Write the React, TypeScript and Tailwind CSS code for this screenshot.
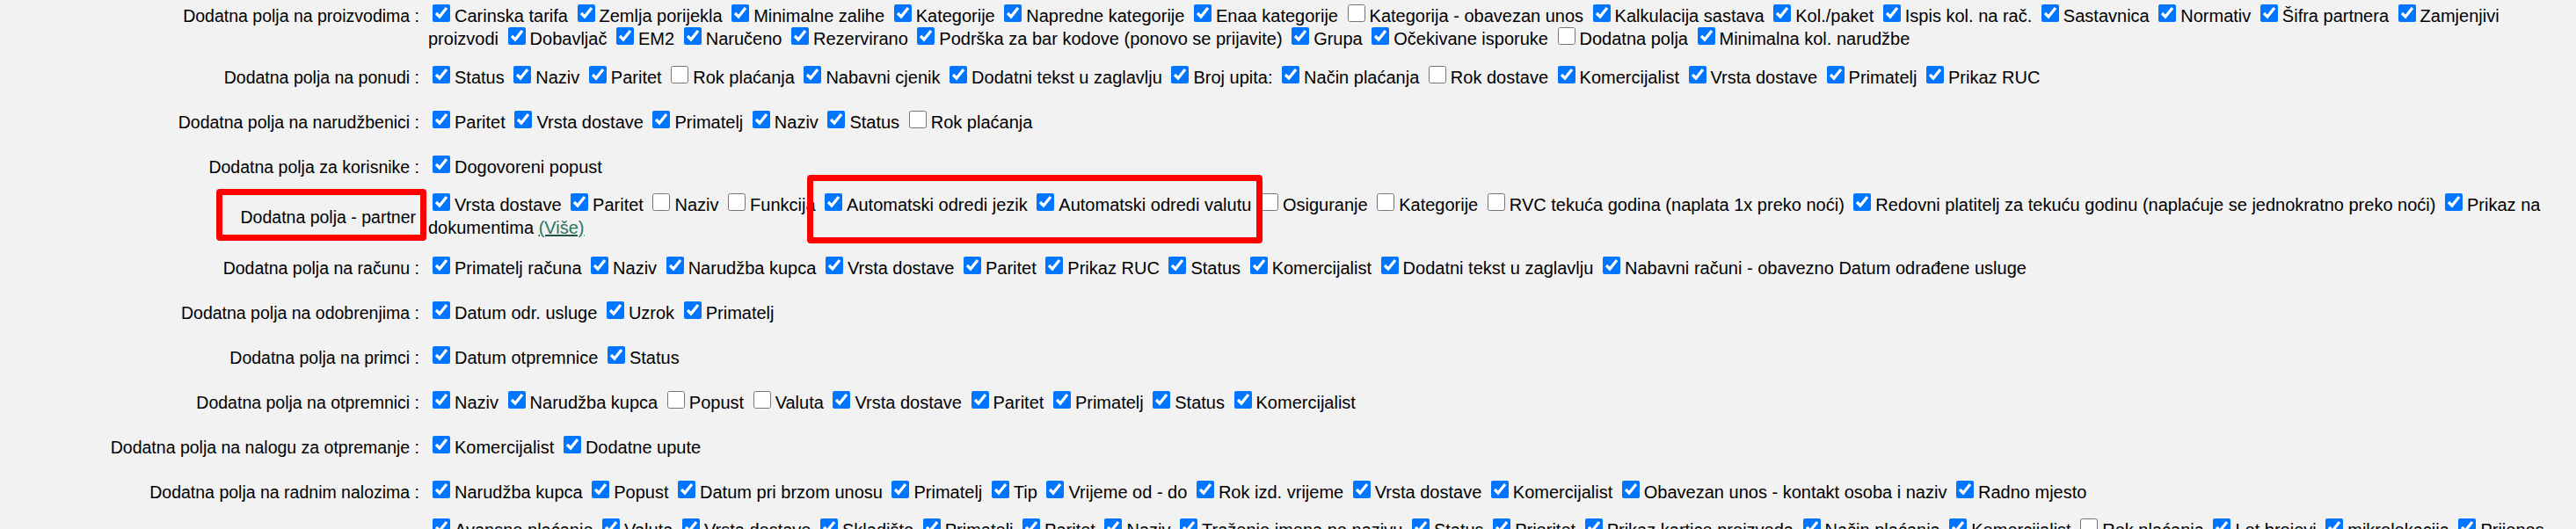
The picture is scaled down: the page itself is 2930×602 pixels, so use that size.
import React from 'react';

type Field = { text: string; checked: boolean };

// "-" prefix marks an unchecked field
const f = (list: string[]): Field[] =>
  list.map((s) => (s.startsWith('-') ? { text: s.slice(1), checked: false } : { text: s, checked: true }));

interface Row {
  label: string;
  labelTop?: boolean;
  narrowLabel?: boolean;
  fields: Field[];
  more?: boolean;
}

const rows: Row[] = [
  {
    label: 'Dodatna polja na proizvodima :',
    labelTop: true,
    fields: f([
      'Carinska tarifa', 'Zemlja porijekla', 'Minimalne zalihe', 'Kategorije', 'Napredne kategorije', 'Enaa kategorije',
      '-Kategorija - obavezan unos', 'Kalkulacija sastava', 'Kol./paket', 'Ispis kol. na rač.', 'Sastavnica', 'Normativ',
      'Šifra partnera', 'Zamjenjivi proizvodi', 'Dobavljač', 'EM2', 'Naručeno', 'Rezervirano',
      'Podrška za bar kodove (ponovo se prijavite)', 'Grupa', 'Očekivane isporuke', '-Dodatna polja', 'Minimalna kol. narudžbe',
    ]),
  },
  {
    label: 'Dodatna polja na ponudi :',
    fields: f([
      'Status', 'Naziv', 'Paritet', '-Rok plaćanja', 'Nabavni cjenik', 'Dodatni tekst u zaglavlju', 'Broj upita:',
      'Način plaćanja', '-Rok dostave', 'Komercijalist', 'Vrsta dostave', 'Primatelj', 'Prikaz RUC',
    ]),
  },
  {
    label: 'Dodatna polja na narudžbenici :',
    fields: f(['Paritet', 'Vrsta dostave', 'Primatelj', 'Naziv', 'Status', '-Rok plaćanja']),
  },
  { label: 'Dodatna polja za korisnike :', fields: f(['Dogovoreni popust']) },
  {
    label: 'Dodatna polja - partner',
    narrowLabel: true,
    more: true,
    fields: f([
      'Vrsta dostave', 'Paritet', '-Naziv', '-Funkcija', 'Automatski odredi jezik', 'Automatski odredi valutu', '-Osiguranje',
      '-Kategorije', '-RVC tekuća godina (naplata 1x preko noći)',
      'Redovni platitelj za tekuću godinu (naplaćuje se jednokratno preko noći)', 'Prikaz na dokumentima',
    ]),
  },
  {
    label: 'Dodatna polja na računu :',
    fields: f([
      'Primatelj računa', 'Naziv', 'Narudžba kupca', 'Vrsta dostave', 'Paritet', 'Prikaz RUC', 'Status', 'Komercijalist',
      'Dodatni tekst u zaglavlju', 'Nabavni računi - obavezno Datum odrađene usluge',
    ]),
  },
  { label: 'Dodatna polja na odobrenjima :', fields: f(['Datum odr. usluge', 'Uzrok', 'Primatelj']) },
  { label: 'Dodatna polja na primci :', fields: f(['Datum otpremnice', 'Status']) },
  {
    label: 'Dodatna polja na otpremnici :',
    fields: f(['Naziv', 'Narudžba kupca', '-Popust', '-Valuta', 'Vrsta dostave', 'Paritet', 'Primatelj', 'Status', 'Komercijalist']),
  },
  { label: 'Dodatna polja na nalogu za otpremanje :', fields: f(['Komercijalist', 'Dodatne upute']) },
  {
    label: 'Dodatna polja na radnim nalozima :',
    fields: f([
      'Narudžba kupca', 'Popust', 'Datum pri brzom unosu', 'Primatelj', 'Tip', 'Vrijeme od - do', 'Rok izd. vrijeme',
      'Vrsta dostave', 'Komercijalist', 'Obavezan unos - kontakt osoba i naziv', 'Radno mjesto',
    ]),
  },
  {
    label: 'Dodatna polja na ulaznim nalozima :',
    fields: f([
      'Avansno plaćanje', 'Valuta', 'Vrsta dostave', 'Skladište', 'Primatelj', 'Paritet', 'Naziv', 'Traženje imena po nazivu',
      'Status', 'Prioritet', 'Prikaz kartice proizvoda', 'Način plaćanja', 'Komercijalist', '-Rok plaćanja', 'Lot brojevi',
      'mikrolokacija', 'Prijenos na skladište', 'Dodatni tekst u zaglavlju', 'Datum isporuke',
    ]),
  },
];

function FieldCheck({ field }: { field: Field }) {
  const [first, ...rest] = field.text.split(' ');
  return (
    <>
      {' '}
      {/* keep the box glued to the first word so it never wraps alone */}
      <span className="whitespace-nowrap">
        <input
          type="checkbox"
          defaultChecked={field.checked}
          className="mx-[5px] mb-[1px] h-[20px] w-[20px] align-baseline"
        />
        {first}
      </span>
      {rest.length > 0 && ' ' + rest.join(' ')}
    </>
  );
}

export default function App() {
  return (
    <div className="relative h-[602px] w-[2930px] overflow-hidden bg-[#f2f2f2] font-['Liberation_Sans',Arial,sans-serif] text-[20px] leading-[26px] text-black">
      {rows.map((row) => (
        <div key={row.label} className="flex min-h-[51px] items-center py-[5px]">
          <div
            className={`w-[487px] shrink-0 text-right text-[19.5px] ${row.narrowLabel ? 'pr-[14px]' : 'pr-[10px]'} ${
              row.labelTop ? 'self-start' : ''
            }`}
          >
            {row.label}
          </div>
          <div className={`flex-1 pr-[20px] ${row.narrowLabel ? 'pb-[2px]' : ''}`}>
            {row.fields.map((field) => (
              <FieldCheck key={field.text} field={field} />
            ))}
            {row.more && (
              <>
                {' '}
                <a href="#" className="text-[#2a7562] underline decoration-[#1f5546]">
                  (Više)
                </a>
              </>
            )}
          </div>
        </div>
      ))}

      {/* red highlight frames drawn over the form */}
      <div className="pointer-events-none absolute left-[246px] top-[215px] h-[59px] w-[239px] rounded-[4px] border-[7px] border-[#ff0000]" />
      <div className="pointer-events-none absolute left-[918px] top-[199px] h-[78px] w-[518px] rounded-[4px] border-[7px] border-[#ff0000]" />
    </div>
  );
}
